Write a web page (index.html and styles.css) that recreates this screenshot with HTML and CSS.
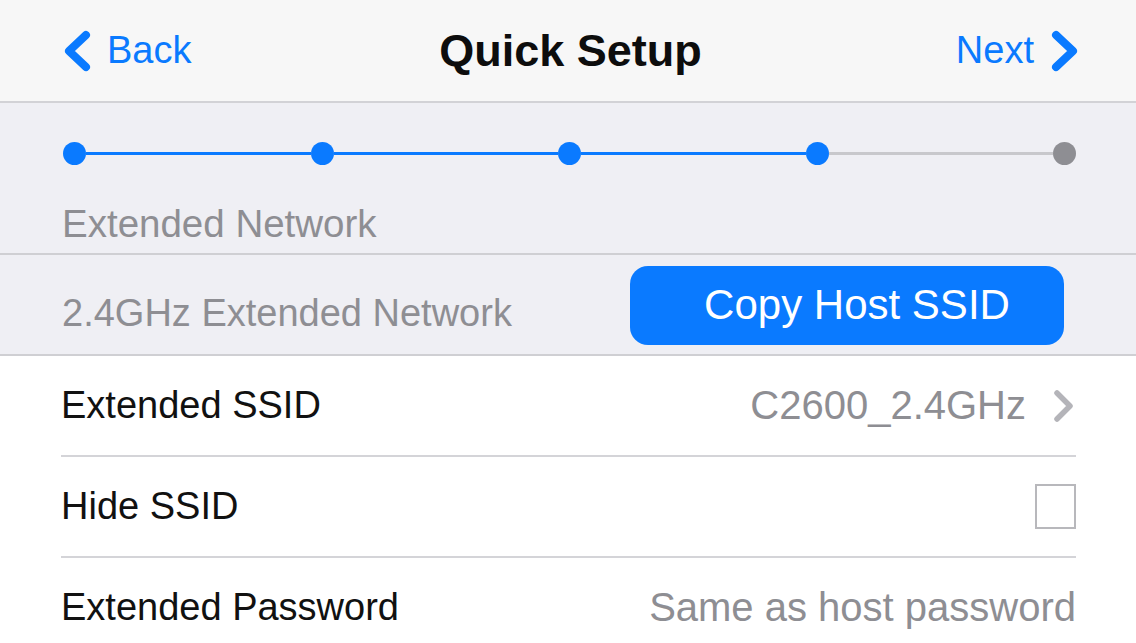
FILE: index.html
```html
<!DOCTYPE html>
<html>
<head>
    <link rel="stylesheet" href="styles.css">
</head>
<body>
    <div class="navbar">
        <a class="nav-link back">
            <svg class="chev" width="30" height="42" viewBox="0 0 30 42"><path d="M25 5 L8 21 L25 37" fill="none" stroke="#0a7aff" stroke-width="8" stroke-linecap="round" stroke-linejoin="round"/></svg>
            <span>Back</span>
        </a>
        <h1 class="title">Quick Setup</h1>
        <a class="nav-link next">
            <span>Next</span>
            <svg class="chev" width="30" height="42" viewBox="0 0 30 42"><path d="M6 5 L23 21 L6 37" fill="none" stroke="#0a7aff" stroke-width="8" stroke-linecap="round" stroke-linejoin="round"/></svg>
        </a>
    </div>

    <div class="steps-section">
        <div class="steps">
            <span class="dot done"></span>
            <span class="track done"></span>
            <span class="dot done"></span>
            <span class="track done"></span>
            <span class="dot done"></span>
            <span class="track done"></span>
            <span class="dot done"></span>
            <span class="track"></span>
            <span class="dot"></span>
        </div>
        <div class="step-label">Extended Network</div>
    </div>

    <div class="band-section">
        <span class="band-label">2.4GHz Extended Network</span>
        <button class="copy-button">Copy Host SSID</button>
    </div>

    <div class="list">
        <div class="row">
            <span class="row-label">Extended SSID</span>
            <span class="row-value">
                C2600_2.4GHz
                <svg class="row-chev" width="24" height="34" viewBox="0 0 24 34"><path d="M5 4 L18 17 L5 30" fill="none" stroke="#b4b4b9" stroke-width="5.5" stroke-linecap="round" stroke-linejoin="round"/></svg>
            </span>
        </div>
        <div class="row">
            <span class="row-label">Hide SSID</span>
            <span class="checkbox"></span>
        </div>
        <div class="row last">
            <span class="row-label">Extended Password</span>
            <span class="row-value">Same as host password</span>
        </div>
    </div>
</body>
</html>
```

FILE: styles.css
```css
body {
    margin: 0;
    width: 1136px;
    height: 643px;
    overflow: hidden;
    background-color: #ffffff;
    font-family: "Liberation Sans", Arial, sans-serif;
    color: #111111;
}
.navbar {
    display: grid;
    grid-template-columns: 1fr auto 1fr;
    align-items: center;
    height: 101px;
    padding: 0 56px 0 61px;
    background-color: #f7f7f7;
    border-bottom: 2px solid #d2d2d6;
}
.nav-link {
    display: flex;
    align-items: center;
    gap: 16px;
    color: #0a7aff;
    font-size: 38px;
}
.nav-link.next {
    justify-self: end;
}
.title {
    margin: 0;
    font-size: 45px;
    font-weight: bold;
    color: #0d0d0d;
}
.steps-section {
    background-color: #efeff4;
    padding: 39px 60px 0 63px;
    height: 111px;
    border-bottom: 2px solid #cfcfd3;
}
.steps {
    display: flex;
    align-items: center;
}
.dot {
    width: 23px;
    height: 23px;
    border-radius: 50%;
    background-color: #8e8e93;
    flex: none;
}
.dot.done {
    background-color: #0a7aff;
}
.track {
    flex: 1;
    height: 3px;
    background-color: #c8c8cc;
}
.track.done {
    background-color: #0a7aff;
}
.step-label {
    margin: 37px 0 0 -1px;
    font-size: 38.5px;
    color: #8e8e93;
}
.band-section {
    display: flex;
    align-items: center;
    justify-content: space-between;
    height: 99px;
    padding: 0 72px 0 62px;
    background-color: #efeff4;
    border-bottom: 2px solid #cfcfd3;
}
.band-label {
    font-size: 38px;
    color: #8e8e93;
    margin-top: 18px;
}
.copy-button {
    width: 434px;
    height: 79px;
    padding: 0 0 0 20px;
    border: none;
    border-radius: 18px;
    background-color: #0a7aff;
    color: #ffffff;
    font-family: "Liberation Sans", Arial, sans-serif;
    font-size: 42px;
    margin-top: 1px;
}
.list {
    margin: 0 60px 0 61px;
}
.row {
    display: flex;
    align-items: center;
    justify-content: space-between;
    height: 99px;
    border-bottom: 2px solid #d4d4d8;
}
.row.last {
    border-bottom: none;
}
.row-label {
    font-size: 38px;
}
.row-value {
    display: flex;
    align-items: center;
    gap: 26px;
    font-size: 40px;
    color: #8e8e93;
}
.checkbox {
    width: 37px;
    height: 41px;
    border: 2px solid #b8b8bc;
}
```
